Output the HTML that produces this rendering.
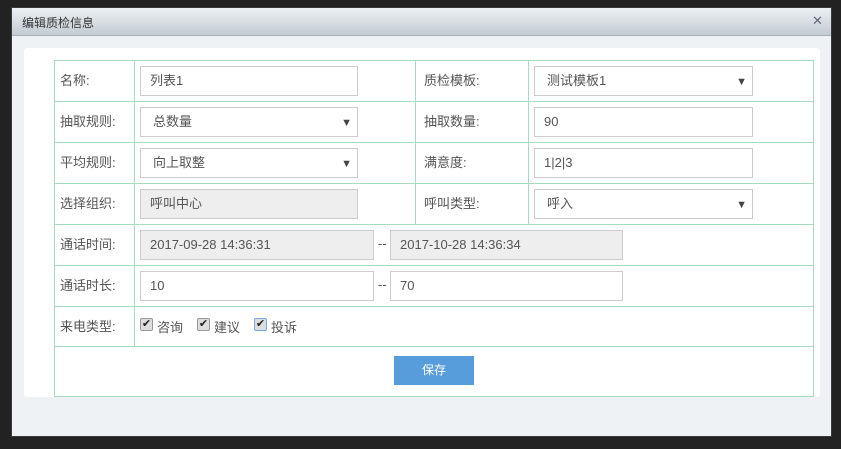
<!DOCTYPE html><html><head><meta charset="utf-8"><style>
*{margin:0;padding:0;box-sizing:border-box}
body{width:841px;height:449px;background:#222;position:relative;overflow:hidden;font-family:"Liberation Sans","Noto Sans CJK SC",sans-serif;font-size:13px;color:#555}
.a{position:absolute}
.dlg{left:11px;top:7px;width:821px;height:430px;background:#eef2f5;border:1px solid #3a3a3a}
.hd{left:12px;top:8px;width:819px;height:28px;background:linear-gradient(#ebf0f3,#c4cbd1);border-bottom:1px solid #aab2b8}
.panel{left:24px;top:48px;width:796px;height:349px;background:#fff;border-radius:3px}
.h{background:#a8dcc0}
.in{border:1px solid #ccc;background:#fff;height:30px;line-height:28px;padding-left:9px;color:#555}
.dis{background:#eee}
.arr{position:absolute;right:5px;top:1px;font-size:11px;color:#444}
.lb{line-height:41px}
.cb{position:absolute;width:13px;height:13px;border:1px solid #999;background:#ddd;border-radius:2px;font-size:11px;line-height:11px;text-align:center;color:#222;top:318px}
</style></head><body>
<div class="a dlg"></div>
<div class="a hd"></div>
<div class="a" style="left:22px;top:14px;font-size:12px;color:#333">编辑质检信息</div>
<div class="a" style="left:812px;top:13px;font-size:13px;color:#667">✕</div>
<div class="a panel"></div>
<div class="a h" style="left:54px;top:60px;width:760px;height:1px"></div>
<div class="a h" style="left:54px;top:101px;width:760px;height:1px"></div>
<div class="a h" style="left:54px;top:142px;width:760px;height:1px"></div>
<div class="a h" style="left:54px;top:183px;width:760px;height:1px"></div>
<div class="a h" style="left:54px;top:224px;width:760px;height:1px"></div>
<div class="a h" style="left:54px;top:265px;width:760px;height:1px"></div>
<div class="a h" style="left:54px;top:306px;width:760px;height:1px"></div>
<div class="a h" style="left:54px;top:346px;width:760px;height:1px"></div>
<div class="a h" style="left:54px;top:396px;width:760px;height:1px"></div>
<div class="a h" style="left:54px;top:60px;width:1px;height:337px"></div>
<div class="a h" style="left:813px;top:60px;width:1px;height:337px"></div>
<div class="a h" style="left:134px;top:60px;width:1px;height:287px"></div>
<div class="a h" style="left:415px;top:60px;width:1px;height:165px"></div>
<div class="a h" style="left:528px;top:60px;width:1px;height:165px"></div>
<div class="a lb" style="left:60px;top:60px">名称:</div>
<div class="a lb" style="left:60px;top:101px">抽取规则:</div>
<div class="a lb" style="left:60px;top:142px">平均规则:</div>
<div class="a lb" style="left:60px;top:183px">选择组织:</div>
<div class="a lb" style="left:60px;top:224px">通话时间:</div>
<div class="a lb" style="left:60px;top:265px">通话时长:</div>
<div class="a lb" style="left:60px;top:306px">来电类型:</div>
<div class="a lb" style="left:424px;top:60px">质检模板:</div>
<div class="a lb" style="left:424px;top:101px">抽取数量:</div>
<div class="a lb" style="left:424px;top:142px">满意度:</div>
<div class="a lb" style="left:424px;top:183px">呼叫类型:</div>
<div class="a in" style="left:140px;top:66px;width:218px">列表1</div>
<div class="a in" style="left:140px;top:107px;width:218px;padding-left:12px">总数量<span class="arr">▼</span></div>
<div class="a in" style="left:140px;top:148px;width:218px;padding-left:12px">向上取整<span class="arr">▼</span></div>
<div class="a in dis" style="left:140px;top:189px;width:218px">呼叫中心</div>
<div class="a in" style="left:534px;top:66px;width:219px;padding-left:12px">测试模板1<span class="arr">▼</span></div>
<div class="a in" style="left:534px;top:107px;width:219px">90</div>
<div class="a in" style="left:534px;top:148px;width:219px">1|2|3</div>
<div class="a in" style="left:534px;top:189px;width:219px;padding-left:12px">呼入<span class="arr">▼</span></div>
<div class="a in dis" style="left:140px;top:230px;width:234px">2017-09-28 14:36:31</div>
<div class="a" style="left:378px;top:236px">--</div>
<div class="a in dis" style="left:390px;top:230px;width:233px">2017-10-28 14:36:34</div>
<div class="a in" style="left:140px;top:271px;width:234px">10</div>
<div class="a" style="left:378px;top:277px">--</div>
<div class="a in" style="left:390px;top:271px;width:233px">70</div>
<span class="cb" style="left:140px">✔</span><div class="a" style="left:157px;top:317px">咨询</div>
<span class="cb" style="left:197px">✔</span><div class="a" style="left:214px;top:317px">建议</div>
<span class="cb" style="left:254px;border-color:#7aa7e8">✔</span><div class="a" style="left:271px;top:317px">投诉</div>
<div class="a" style="left:394px;top:356px;width:80px;height:29px;background:#589ddb;color:#fff;text-align:center;line-height:29px;font-size:12px">保存</div>
</body></html>
